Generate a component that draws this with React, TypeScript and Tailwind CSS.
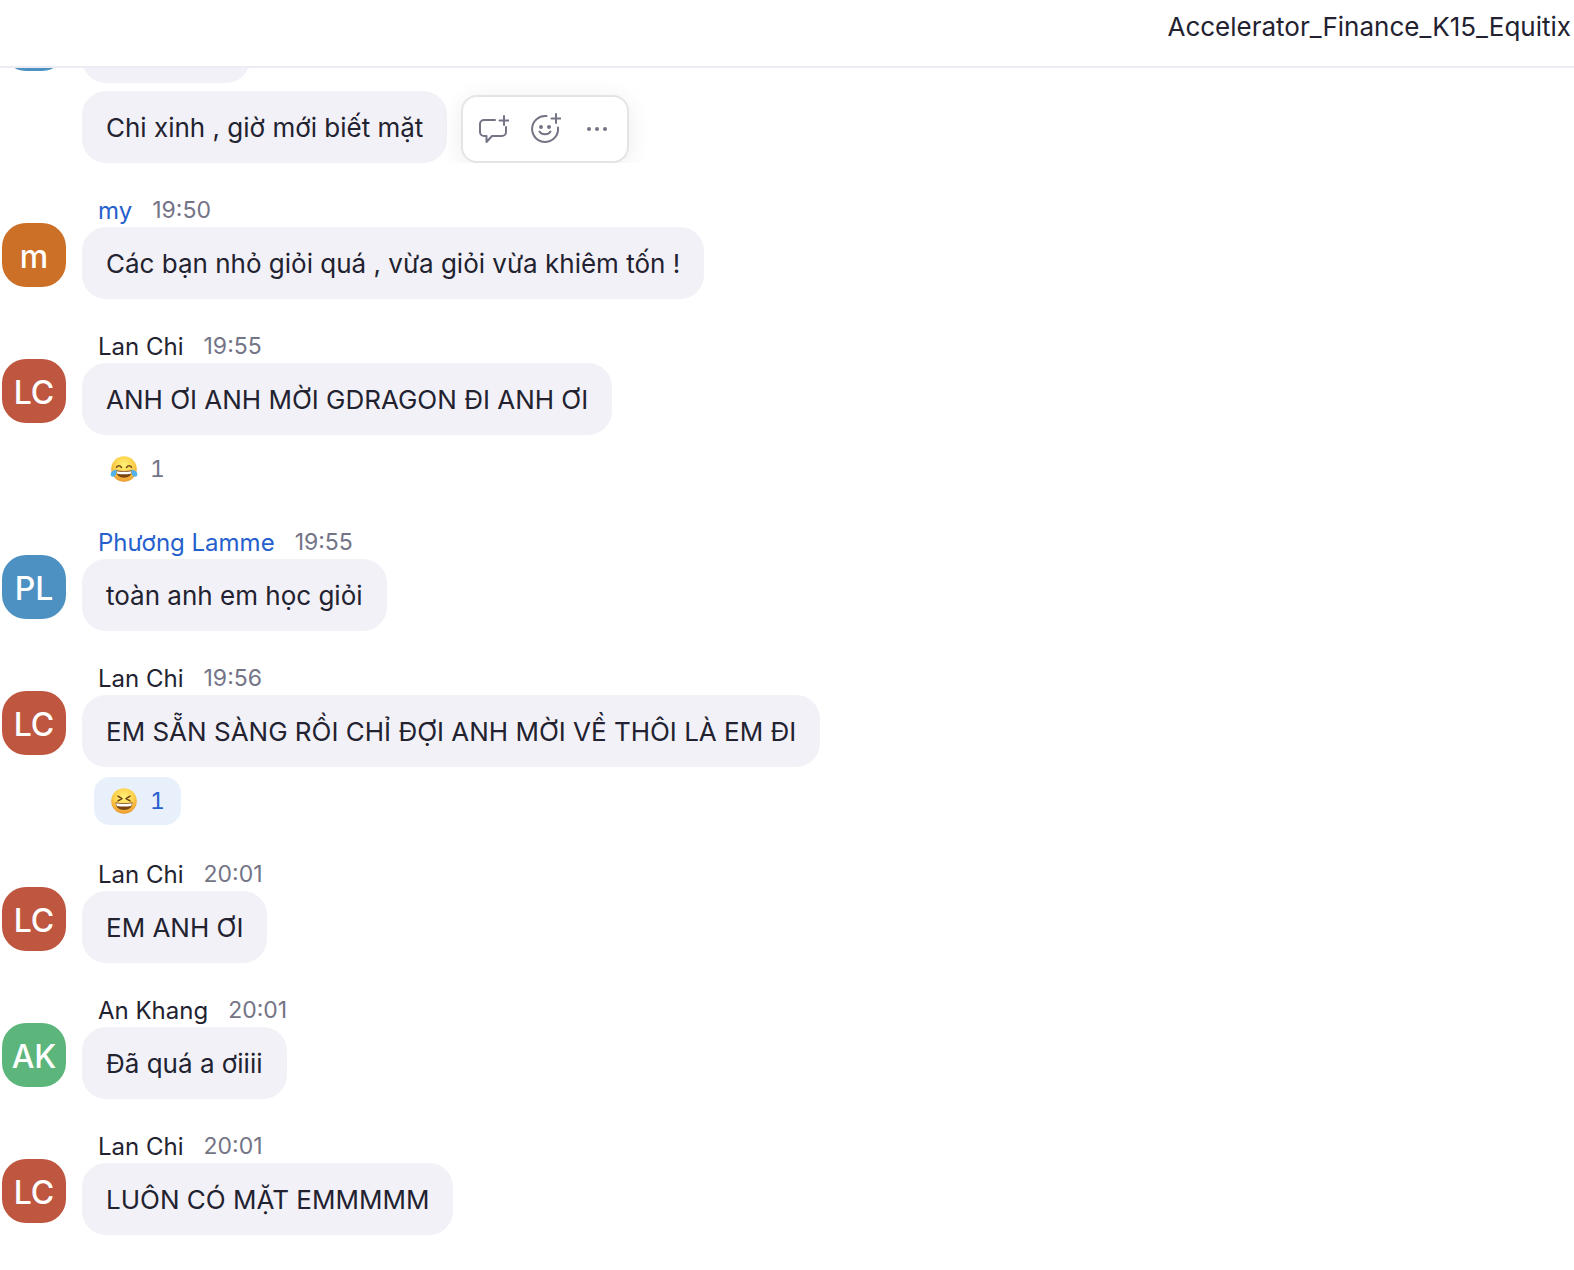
import type { ReactNode } from 'react';

type ReactionKind = 'joy' | 'laughing';

interface Reaction {
  kind: ReactionKind;
  count: number;
  mine?: boolean;
}

interface Message {
  id: number;
  initials: string;
  color: string;
  author: string;
  highlighted?: boolean;
  time: string;
  text: string;
  reaction?: Reaction;
}

const messages: Message[] = [
  {
    id: 1,
    initials: 'm',
    color: 'bg-[#cd7027]',
    author: 'my',
    highlighted: true,
    time: '19:50',
    text: 'Các bạn nhỏ giỏi quá , vừa giỏi vừa khiêm tốn !',
  },
  {
    id: 2,
    initials: 'LC',
    color: 'bg-[#be5640]',
    author: 'Lan Chi',
    time: '19:55',
    text: 'ANH ƠI ANH MỜI GDRAGON ĐI ANH ƠI',
    reaction: { kind: 'joy', count: 1 },
  },
  {
    id: 3,
    initials: 'PL',
    color: 'bg-[#4d91c2]',
    author: 'Phương Lamme',
    highlighted: true,
    time: '19:55',
    text: 'toàn anh em học giỏi',
  },
  {
    id: 4,
    initials: 'LC',
    color: 'bg-[#be5640]',
    author: 'Lan Chi',
    time: '19:56',
    text: 'EM SẴN SÀNG RỒI CHỈ ĐỢI ANH MỜI VỀ THÔI LÀ EM ĐI',
    reaction: { kind: 'laughing', count: 1, mine: true },
  },
  {
    id: 5,
    initials: 'LC',
    color: 'bg-[#be5640]',
    author: 'Lan Chi',
    time: '20:01',
    text: 'EM ANH ƠI',
  },
  {
    id: 6,
    initials: 'AK',
    color: 'bg-[#5cb67b]',
    author: 'An Khang',
    time: '20:01',
    text: 'Đã quá a ơiiii',
  },
  {
    id: 7,
    initials: 'LC',
    color: 'bg-[#be5640]',
    author: 'Lan Chi',
    time: '20:01',
    text: 'LUÔN CÓ MẶT EMMMMM',
  },
];

function Emoji({ kind }: { kind: ReactionKind }) {
  return (
    <svg viewBox="0 0 28 28" className="size-7 shrink-0" aria-hidden="true">
      <defs>
        <radialGradient id={`face-${kind}`} cx="0.5" cy="0.35" r="0.65">
          <stop offset="0" stopColor="#fff27a" />
          <stop offset="0.6" stopColor="#fdd04a" />
          <stop offset="1" stopColor="#e9962f" />
        </radialGradient>
      </defs>
      <circle cx="14" cy="14" r="12.8" fill={`url(#face-${kind})`} />
      {kind === 'joy' ? (
        <>
          <path
            d="M6.5 12.2q2.4-3 5 .2M16.5 12.4q2.6-3.2 5-.2"
            fill="none"
            stroke="#7a4a14"
            strokeWidth="1.6"
            strokeLinecap="round"
          />
          <path d="M6 15.2q8 1.6 16 0q-.4 7.600-8 7.600t-8-7.600z" fill="#7a4311" />
          <path d="M6.7 16.2q7.3 1.3 14.6 0q0 1.6-.6 2.6q-6.7 1-13.4 0q-.6-1-.6-2.600z" fill="#fff" />
          <path d="M6.6 14.6q-6 1.300-6 4.800c0 3 4.700 3 5.400 0q.6-2.500.6-4.800z" fill="#4fb4ec" />
          <path d="M21.4 14.6q6 1.300 6 4.800c0 3-4.700 3-5.400 0q-.6-2.500-.6-4.800z" fill="#4fb4ec" />
        </>
      ) : (
        <>
          <path
            d="M8 9.2l4 2.4l-4 2.2M20 9.2l-4 2.4l4 2.2"
            fill="none"
            stroke="#6b3f14"
            strokeWidth="1.5"
            strokeLinecap="round"
            strokeLinejoin="round"
          />
          <path d="M5.4 15.2q8.600 2 17.200 0q-.4 7.800-8.600 7.800t-8.600-7.800z" fill="#7a4311" />
          <path d="M6.2 16.2q7.800 1.500 15.600 0q0 1.700-.6 2.700q-7.200 1.100-14.400 0q-.6-1-.6-2.700z" fill="#fff" />
        </>
      )}
    </svg>
  );
}

function Avatar({ initials, color }: { initials: string; color: string }) {
  return (
    <div
      className={`-mt-1 flex size-16 shrink-0 items-center justify-center rounded-3xl pt-1 text-[32px] leading-none font-medium text-white ${color}`}
    >
      {initials}
    </div>
  );
}

function Bubble({ children }: { children: ReactNode }) {
  return (
    <p className="w-fit rounded-3xl bg-[#f2f1f7] px-6 pt-[19px] pb-[17px] text-[26px] leading-9 text-[#222230]">
      {children}
    </p>
  );
}

function ReactionPill({ kind, count, mine }: Reaction) {
  return (
    <button
      type="button"
      aria-label={`${kind} ${count}`}
      className={`mt-[10px] mb-[2px] ml-3 flex h-12 w-fit items-center gap-3 rounded-2xl px-4 text-[23px] tabular-nums ${
        mine ? 'bg-[#e8f0fc] text-[#2560cd]' : 'text-[#747487]'
      }`}
    >
      <Emoji kind={kind} />
      {count}
    </button>
  );
}

function MessageItem({ message }: { message: Message }) {
  return (
    <article className="shrink-0 pt-8 pl-[2px]">
      <header className="ml-24 flex h-8 items-start gap-5">
        <a
          href="#"
          className={`text-2xl leading-8 ${message.highlighted ? 'text-[#2560cd]' : 'text-[#222230]'}`}
        >
          {message.author}
        </a>
        <time className="text-[23px] leading-[30px] text-[#747487]">{message.time}</time>
      </header>
      <div className="flex items-start gap-4">
        <Avatar initials={message.initials} color={message.color} />
        <div>
          <Bubble>{message.text}</Bubble>
          {message.reaction && <ReactionPill {...message.reaction} />}
        </div>
      </div>
    </article>
  );
}

function ActionButton({ label, children }: { label: string; children: ReactNode }) {
  return (
    <button type="button" aria-label={label} className="flex w-[52px] items-center justify-center">
      <svg
        viewBox="0 0 32 32"
        className="size-8"
        fill="none"
        stroke="currentColor"
        strokeWidth="2"
        strokeLinecap="round"
        strokeLinejoin="round"
      >
        {children}
      </svg>
    </button>
  );
}

function MessageActions() {
  return (
    <div className="flex h-[68px] self-end rounded-2xl border-2 border-[#e4e4e6] bg-white px-1 text-[#747487] shadow-[0_4px_24px_rgba(0,0,0,0.08)]">
      <ActionButton label="Reply">
        <path d="M18 7H7a4 4 0 0 0-4 4v8a4 4 0 0 0 4 4h2.500v6L15 23H25a4 4 0 0 0 4-4V14" />
        <path d="M27 3v9M22.5 7.5h9" />
      </ActionButton>
      <ActionButton label="Add reaction">
        <path d="M17.5 3.1A13 13 0 1 0 29 14.5" />
        <path d="M10.5 18.5a6 4.5 0 0 0 11 0" />
        <path d="M27 1v9M22.5 5.5h9" />
        <circle cx="12" cy="14" r="2" fill="currentColor" stroke="none" />
        <circle cx="20" cy="14" r="2" fill="currentColor" stroke="none" />
      </ActionButton>
      <ActionButton label="More">
        <g fill="currentColor" stroke="none">
          <circle cx="8" cy="16" r="2" />
          <circle cx="16" cy="16" r="2" />
          <circle cx="24" cy="16" r="2" />
        </g>
      </ActionButton>
    </div>
  );
}

export default function App() {
  return (
    <div className="flex h-screen flex-col bg-white font-['Inter',sans-serif]">
      <header className="flex h-[68px] shrink-0 justify-end border-b-2 border-[#edecf4] pt-[9px] pr-[3px]">
        <h1 className="text-[26px] leading-9 text-[#222230]">Accelerator_Finance_K15_Equitix</h1>
      </header>

      {/* the newest message stays at the bottom, older ones run out under the header */}
      <main className="flex min-h-0 flex-1 flex-col justify-end overflow-hidden pb-[35px]">
        <section className="shrink-0 overflow-hidden pl-[2px]">
          <div className="flex items-start gap-4 pt-1">
            <Avatar initials="" color="bg-[#4d91c2]" />
            <div className="h-[72px] w-[168px] rounded-3xl bg-[#f2f1f7]" />
          </div>
          <div className="mt-2 ml-20 flex gap-[14px]">
            <Bubble>Chi xinh , giờ mới biết mặt</Bubble>
            <MessageActions />
          </div>
        </section>

        {messages.map((message) => (
          <MessageItem key={message.id} message={message} />
        ))}
      </main>
    </div>
  );
}
